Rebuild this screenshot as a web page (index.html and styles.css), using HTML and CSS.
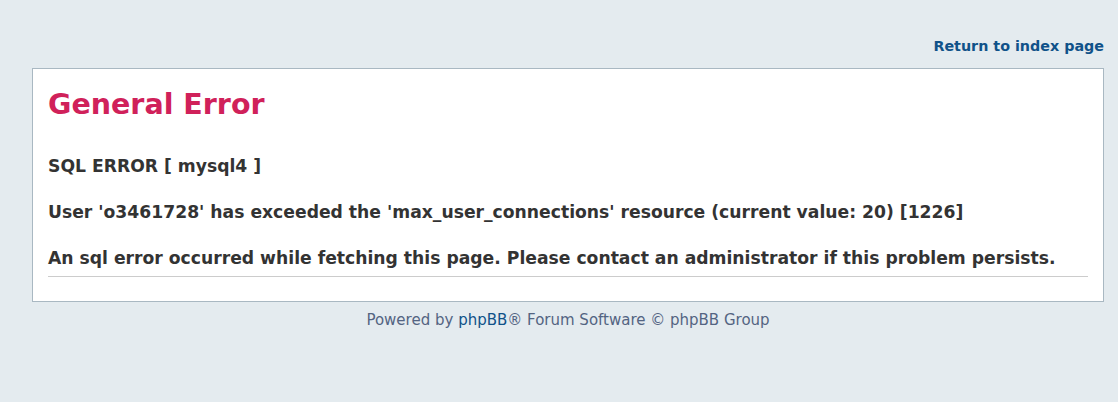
FILE: index.html
```html
<!DOCTYPE html>
<html>
<head>
<meta charset="utf-8">
<title>General Error</title>
<link rel="stylesheet" href="styles.css">
</head>
<body>
<div class="wrap">
  <div class="page-header"><a href="#" class="return-link">Return to index page</a></div>
  <div class="panel">
    <h1 class="title">General Error</h1>
    <div class="message">
      <p class="line">SQL ERROR [ mysql4 ]</p>
      <p class="line">User 'o3461728' has exceeded the 'max_user_connections' resource (current value: 20) [1226]</p>
      <p class="line">An sql error occurred while fetching this page. Please contact an administrator if this problem persists.</p>
    </div>
  </div>
  <div class="page-footer">Powered by <a href="#" class="footer-link">phpBB</a>® Forum Software © phpBB Group</div>
</div>
</body>
</html>
```
FILE: styles.css
```css
* { margin: 0; padding: 0; box-sizing: border-box; }
html, body { background: #e4ebef; height: 100%; }
body {
  font-family: "DejaVu Sans", Verdana, sans-serif;
  color: #536482;
}
.wrap {
  padding: 0 14px 0 32px;
}
.page-header {
  height: 68px;
  display: flex;
  justify-content: flex-end;
  align-items: flex-start;
  padding-top: 37px;
}
.return-link {
  font-size: 14.3px;
  font-weight: bold;
  color: #105289;
  text-decoration: none;
  line-height: 18px;
}
.panel {
  background: #fff;
  border: 1px solid #a9b8c2;
  padding: 18px 15px 24px 15px;
}
.title {
  font-size: 28.5px;
  font-weight: bold;
  color: #d0215a;
  line-height: 36px;
}
.message {
  margin-top: 33px;
  border-bottom: 1px solid #cccccc;
  padding-bottom: 7px;
  display: flex;
  flex-direction: column;
  gap: 25px;
}
.line {
  font-size: 17.2px;
  font-weight: bold;
  color: #333333;
  line-height: 21px;
}
.page-footer {
  text-align: center;
  font-size: 15px;
  margin-top: 8px;
  line-height: 20px;
}
.footer-link { color: #105289; text-decoration: none; }
```
